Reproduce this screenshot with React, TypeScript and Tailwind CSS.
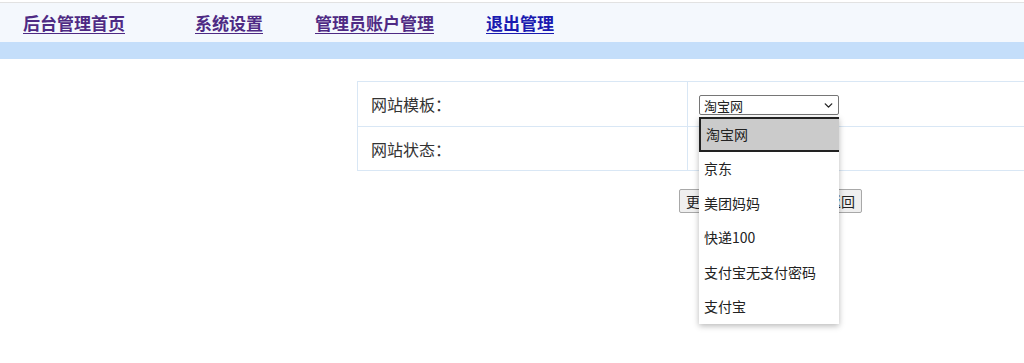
import { ChevronDown } from "lucide-react";

const navLinks = [
  { label: "后台管理首页", visited: true },
  { label: "系统设置", visited: true },
  { label: "管理员账户管理", visited: true },
  { label: "退出管理", visited: false },
];

const templates = ["淘宝网", "京东", "美团妈妈", "快递100", "支付宝无支付密码", "支付宝"];

function FakeSelect({ value, children }: { value: string; children?: React.ReactNode }) {
  return (
    <div className="relative w-[140px]">
      <div className="h-[20px] w-[140px] border border-[#767676] rounded-[2px] bg-white flex items-center pl-[4px] pr-[3px] text-[13px] text-[#222] leading-none">
        <span className="flex-1">{value}</span>
        <ChevronDown className="w-[13px] h-[13px] text-[#222]" strokeWidth={2.5} />
      </div>
      {children}
    </div>
  );
}

export default function App() {
  return (
    <div className="w-[1024px] h-[363px] bg-white overflow-hidden font-['Noto_Sans_CJK_SC','Microsoft_YaHei',sans-serif]">
      {/* top nav */}
      <header className="mt-[2px] border-t border-[#e2e2e2] h-[40px] bg-[#f4f8fd] flex items-center pl-[23px] pb-[1px]">
        {navLinks.map((l, i) => (
          <a
            key={l.label}
            href="#"
            className={`text-[17px] font-bold underline underline-offset-[3px] leading-none ${
              l.visited ? "text-[#4e2a84]" : "text-[#1a1ab0]"
            } ${i === 0 ? "mr-[70px]" : "mr-[52px]"}`}
          >
            {l.label}
          </a>
        ))}
      </header>
      <div className="h-[17px] bg-[#c4defa]" />

      {/* settings table */}
      <main className="pt-[22px] pl-[357px]">
        <div className="border-t border-l border-b border-[#d9e7f5] text-[16px] text-[#333]">
          <div className="flex h-[45px] border-b border-[#d9e7f5]">
            <div className="w-[330px] border-r border-[#d9e7f5] flex items-center pl-[13px]">网站模板：</div>
            <div className="flex-1 pl-[11px] pt-[13px]">
              <FakeSelect value="淘宝网">
                {/* open option list */}
                <div className="absolute left-0 top-[22px] z-10 w-[140px] bg-white shadow-[0_2px_6px_rgba(0,0,0,0.28)] text-[14px] text-[#222]">
                  {templates.map((t, i) => (
                    <div
                      key={t}
                      className={`h-[34.5px] flex items-center pl-[5px] ${
                        i === 0 ? "bg-[#cbcbcb] border-l-2 border-b-2 border-t-2 border-[#222] pl-[3px]" : ""
                      }`}
                    >
                      {t}
                    </div>
                  ))}
                </div>
              </FakeSelect>
            </div>
          </div>
          <div className="flex h-[43px]">
            <div className="w-[330px] border-r border-[#d9e7f5] flex items-center pl-[13px]">网站状态：</div>
            <div className="flex-1 pl-[11px] pt-[12px]">
              <FakeSelect value="正常" />
            </div>
          </div>
        </div>

        <div className="flex gap-[71px] pl-[322px] mt-[18px] text-[14px] text-[#222]">
          <button className="h-[24px] px-[6px] bg-[#efefef] border border-[#a8a8a8] rounded-[2px]">更新设置</button>
          <button className="h-[24px] px-[6px] bg-[#efefef] border border-[#a8a8a8] rounded-[2px]">返回</button>
        </div>
      </main>
    </div>
  );
}
